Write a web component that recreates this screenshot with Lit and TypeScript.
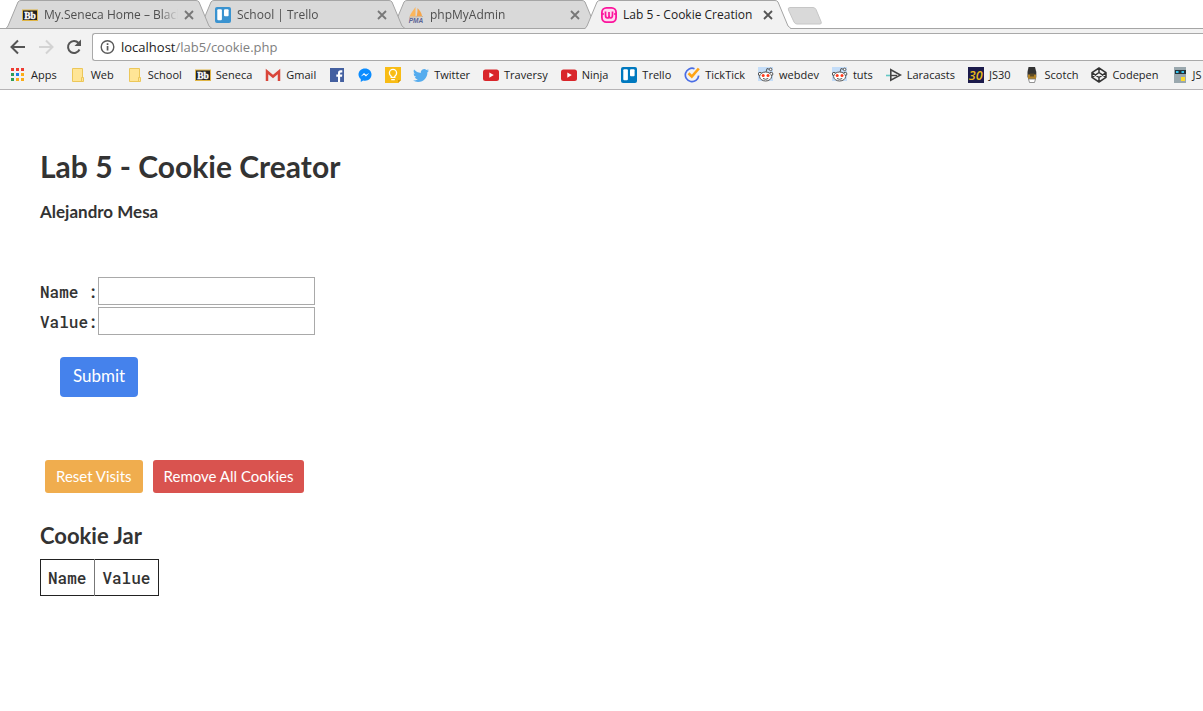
import { LitElement, html, css, svg, nothing, TemplateResult } from "lit";
import { customElement, property } from "lit/decorators.js";
import { classMap } from "lit/directives/class-map.js";

const blackboard = svg`<rect y="2.500" width="16" height="11.500" fill="#e0b544"/><rect x="1" y="3.500" width="14" height="9.500" fill="#222"/><text x="8" y="11.500" text-anchor="middle" font-family="Liberation Serif, serif" font-weight="700" font-size="9.500" fill="#fff" stroke="#fff" stroke-width=".3">Bb</text>`;
const youtube = svg`<rect y="2.500" width="16" height="11.500" rx="2.500" fill="#d9252a"/><path d="M6.300 5.500v5.200L10.800 8.100z" fill="#fff"/>`;
const folder = svg`<path d="M2.500 1.500h10v10h1v3h-11z" fill="#ffe596" stroke="#ecc759"/><path d="M11.500 14v-3.500h2V14" fill="#ffe596" stroke="#ecc759"/>`;
const reddit = svg`<rect y="0" width="15" height="14" fill="#c4ddf8"/><path d="M8 5l1-3.500 3 1" fill="none" stroke="#555"/><circle cx="12.600" cy="2.400" r="1.300" fill="#fff" stroke="#555"/><circle cx="2" cy="7" r="1.700" fill="#fff" stroke="#555"/><circle cx="13.200" cy="7" r="1.700" fill="#fff" stroke="#555"/><ellipse cx="7.600" cy="9.500" rx="6" ry="4.500" fill="#fff" stroke="#555"/><circle cx="5.200" cy="8.500" r="1.500" fill="#ff3a1c"/><circle cx="10" cy="8.500" r="1.500" fill="#ff3a1c"/><path d="M5 11.500q2.600 1.600 5.200 0" fill="none" stroke="#555"/>`;
const trello = (fill: string) => svg`<rect width="16" height="16" rx="2" fill="${fill}"/><rect x="2.300" y="2.300" width="4.600" height="11" rx="1" fill="#fff"/><rect x="9" y="2.300" width="4.600" height="7" rx="1" fill="#fff"/>`;

const icons: Record<string, unknown> = {
  blackboard,
  youtube,
  folder,
  reddit,
  trello: trello("#0079bf"),
  trelloTab: trello("#3a93d0"),
  pma: svg`<path d="M7.500 0v9.500H1.500C3 6 5 3.500 7.500 0z" fill="#fbb65c"/><path d="M9.500 1C12 3.500 13.500 6 14 9L8.500 9.700C9.500 6 9.500 4 9.500 1z" fill="#f5a54b"/><path d="M1 10.300l14-.8" stroke="#c9b49b"/><text x="8" y="16" text-anchor="middle" font-family="Liberation Sans, sans-serif" font-weight="700" font-style="italic" font-size="6.500" fill="#5c6495">PMA</text>`,
  wamp: svg`<rect x=".9" y=".9" width="14.200" height="14.200" rx="4.500" fill="#ffd9f0" stroke="#fb149c" stroke-width="1.800"/><path d="M0 7h3M13 7h3M4.500 4.500v3.500q0 3 1.900 3T8 8V5v3q0 3 1.700 3t1.800-3V4.500" fill="none" stroke="#fb149c" stroke-width="1.700"/>`,
  apps: svg`<path d="M1 1h3v3H1zM6 1h3v3H6zM11 1h3v3h-3z" fill="#ee3b32"/><path d="M1 6h3v3H1z" fill="#2e9e57"/><path d="M6 6h3v3H6z" fill="#1a80e8"/><path d="M11 6h3v3h-3zM6 11h3v3H6zM11 11h3v3h-3z" fill="#fbad18"/><path d="M1 11h3v3H1z" fill="#2e9e57"/>`,
  gmail: svg`<path d="M1 3h14v11H1z" fill="#eee"/><path d="M2 14V4.500L8 9.500l6-5V14" fill="none" stroke="#d9453a" stroke-width="2.500"/>`,
  facebook: svg`<rect x="1" y="1" width="14" height="14" fill="#4460a0"/><path d="M9 15V9.700H7.300V7.500H9V6Q9 3.300 11.700 3.300h1.600v2.200H12q-.9 0-.9 1v1h2.200L13 9.700h-1.900V15z" fill="#fff"/>`,
  messenger: svg`<path d="M8 1.500c-3.700 0-6.500 2.600-6.500 6 0 1.900.9 3.500 2.300 4.600V15l2.300-1.600c4.600 1.200 8.400-1.800 8.400-5.900 0-3.400-2.800-6-6.500-6z" fill="#0a8cff"/><path d="M3.700 9.500l3.300-3.400 2 1.600 3.200-1.700L9 9.500 7 7.800z" fill="#fff"/>`,
  keep: svg`<path d="M0 0h16v13l-3 3H0z" fill="#f8bc15"/><path d="M16 13h-3v3z" fill="#d99a05"/><path d="M6.200 10.400V9.300Q4.400 8 4.400 6a3.600 3.600 0 0 1 7.200 0q0 2-1.800 3.300v1.100zM6.200 12.700h3.600" fill="none" stroke="#fff" stroke-width="1.300"/>`,
  twitter: svg`<path transform="translate(0 .5) scale(.667)" d="M23.950 4.570a10 10 0 0 1-2.820.770 4.960 4.960 0 0 0 2.160-2.720c-.950.550-2.010.950-3.130 1.180a4.920 4.920 0 0 0-8.380 4.480C7.690 8.090 4.070 6.130 1.640 3.160a4.820 4.820 0 0 0-.67 2.480c0 1.710.87 3.210 2.190 4.100a4.900 4.900 0 0 1-2.230-.620v.060a4.920 4.920 0 0 0 3.950 4.830 5 5 0 0 1-2.210.080 4.940 4.940 0 0 0 4.600 3.420A9.870 9.870 0 0 1 0 19.540a13.990 13.990 0 0 0 7.550 2.210c9.050 0 14-7.500 14-13.980l-.020-.630a9.940 9.940 0 0 0 2.460-2.550z" fill="#55acee"/>`,
  ticktick: svg`<path d="M10.500 1.700a6.700 6.700 0 1 0 4.200 7" fill="none" stroke="#4a6de5" stroke-width="1.700"/><path d="M4.500 6.300l3.300 3.200 7-8" fill="none" stroke="#ffa415" stroke-width="2.600"/>`,
  laracasts: svg`<path d="M4.800 2.700L14.500 8 4.800 13.200V8z" fill="#f2f2f2" stroke="#444" stroke-width="1.600"/><path d="M0 8.500h4" stroke="#62c7c4" stroke-width="1.600"/><path d="M4 8.500h7" stroke="#444" stroke-width="1.400"/>`,
  js30: svg`<rect width="16" height="16" fill="#1c1b4b"/><text x="7.700" y="13" text-anchor="middle" font-family="Open Sans, sans-serif" font-weight="600" font-style="italic" font-size="12.500" fill="#edbd18">30</text>`,
  scotch: svg`<path d="M4.500 0h6.500l1.300 5v5.500H3.500V5z" fill="#333"/><path d="M4 7.500h8v4.500H4z" fill="#b28327"/><path d="M6 6.500h4v3H6z" fill="#5d4b24"/><path d="M4.500 12h7l-1 3.500h-5z" fill="#fff" stroke="#777" stroke-width=".8"/>`,
  codepen: svg`<path d="M8 1l7 4.600v4.800L8 15l-7-4.600V5.600zM8 1v4.500M8 15v-4.500M1 5.600l7 4.900 7-4.900M1 10.400l7-4.900 7 4.900" fill="none" stroke="#333" stroke-width="1.500" stroke-linejoin="round"/>`,
  robot: svg`<path d="M2 0h12v16H2z" fill="#9aa8ae"/><rect x="3" y="3" width="11" height="4" fill="#263238"/><path d="M4 4h2.500v2H4zM9.500 4H12v2H9.500z" fill="#35c3ee"/><rect x="9" y="10" width="4" height="4" fill="#fddc2c"/>`,
};

const icon = (name: string): TemplateResult =>
  html`<svg class="icon" viewBox="0 0 16 16" aria-hidden="true">${icons[name]}</svg>`;

const iconStyles = css`
  .icon {
    width: 16px;
    height: 16px;
    flex: none;
    display: block;
  }
`;

@customElement("browser-tab")
class BrowserTab extends LitElement {
  @property() label = "";
  @property() icon = "";
  @property({ type: Boolean, reflect: true }) active = false;

  static styles = [
    iconStyles,
    css`
      :host {
        display: grid;
        width: 206px;
        height: 29px;
        flex: none;
      }
      .shape,
      .tab {
        grid-area: 1 / 1;
      }
      .shape {
        width: 206px;
        height: 29px;
      }
      .tab {
        display: flex;
        align-items: center;
        min-width: 0;
        padding: 0 18px 0 16px;
        color: #4f4f4f;
      }
      .tab.active {
        color: #222;
      }
      .label {
        flex: 1;
        min-width: 0;
        margin: 0 4px 0 6px;
        overflow: hidden;
        white-space: nowrap;
        mask-image: linear-gradient(to right, #000 calc(100% - 20px), transparent calc(100% - 2px));
      }
      .active .label {
        mask-image: none;
      }
      .close {
        border: 0;
        padding: 0;
        background: none;
        width: 10px;
        height: 10px;
      }
      .close svg {
        display: block;
      }
    `,
  ];

  render() {
    const fill = this.active ? "#f2f2f2" : "#d9d9d9";
    return html`
      <svg class="shape" viewBox="0 0 206 29" aria-hidden="true">
        <path d="M0 29L2 26 12 2Q13 .5 15 .5H190Q192 .5 193 2L203 26 206 29z" fill=${fill} />
        <path d="M0 28.500L2 26 12 2Q13 .5 15 .5H190Q192 .5 193 2L203 26 206 28.500" fill="none" stroke="#a5a5a5" />
        ${this.active ? nothing : svg`<path d="M0 28.500H206" stroke="#a5a5a5"/>`}
      </svg>
      <div class=${classMap({ tab: true, active: this.active })}>
        ${icon(this.icon)}
        <span class="label">${this.label}</span>
        <button class="close" aria-label="Close tab">
          <svg width="10" height="10" viewBox="0 0 10 10">
            <path d="M1 1l8 8M9 1L1 9" stroke=${this.active ? "#555" : "#777"} stroke-width="1.800" />
          </svg>
        </button>
      </div>
    `;
  }
}

const bookmarks: [string, string][] = [
  ["apps", "Apps"],
  ["folder", "Web"],
  ["folder", "School"],
  ["blackboard", "Seneca"],
  ["gmail", "Gmail"],
  ["facebook", ""],
  ["messenger", ""],
  ["keep", ""],
  ["twitter", "Twitter"],
  ["youtube", "Traversy"],
  ["youtube", "Ninja"],
  ["trello", "Trello"],
  ["ticktick", "TickTick"],
  ["reddit", "webdev"],
  ["reddit", "tuts"],
  ["laracasts", "Laracasts"],
  ["js30", "JS30"],
  ["scotch", "Scotch"],
  ["codepen", "Codepen"],
  ["robot", "JS"],
];

@customElement("browser-chrome")
class BrowserChrome extends LitElement {
  static styles = [
    iconStyles,
    css`
      :host {
        display: block;
        font: 12px/16px "Open Sans", sans-serif;
        color: #222;
      }
      .strip {
        display: flex;
        padding-left: 6px;
        height: 29px;
        overflow: hidden;
        background: linear-gradient(#a5a5a5, #a5a5a5) 0 28px / 100% 1px no-repeat #fff;
      }
      browser-tab {
        margin-right: -13px;
        z-index: 1;
      }
      browser-tab:nth-of-type(1) {
        z-index: 3;
      }
      browser-tab:nth-of-type(2) {
        z-index: 2;
      }
      browser-tab[active] {
        z-index: 4;
      }
      button {
        border: 0;
        padding: 0;
        background: none;
      }
      .new-tab {
        margin: 7px 0 0 9px;
        height: 18px;
      }
      .new-tab svg {
        display: block;
      }
      .toolbar {
        display: flex;
        align-items: center;
        gap: 12px;
        height: 36px;
        padding-left: 10px;
        background: #f2f2f2;
      }
      .address {
        flex: 1;
        display: flex;
        align-items: center;
        gap: 5px;
        margin-left: -2px;
        height: 26px;
        padding-left: 7px;
        border: 1px solid #a9a9a9;
        border-right: 0;
        border-radius: 3px 0 0 3px;
        background: #fff;
        font-size: 13px;
        line-height: 18px;
      }
      .path {
        color: #808080;
      }
      .bookmarks {
        display: flex;
        gap: 12px;
        height: 24px;
        padding: 0 0 0 10px;
        overflow: hidden;
        background: #f2f2f2;
        border-bottom: 1px solid #b6b4b6;
      }
      .bookmark {
        display: flex;
        flex: none;
        gap: 5px;
        height: 20px;
        align-items: center;
        color: inherit;
        text-decoration: none;
        font-size: 11px;
        white-space: nowrap;
      }
      .bookmark span {
        padding-right: 1px;
      }
    `,
  ];

  render() {
    return html`
      <div class="strip">
        <browser-tab icon="blackboard" label="My.Seneca Home – Blackboard"></browser-tab>
        <browser-tab icon="trelloTab" label="School | Trello"></browser-tab>
        <browser-tab icon="pma" label="phpMyAdmin"></browser-tab>
        <browser-tab icon="wamp" label="Lab 5 - Cookie Creation" active></browser-tab>
        <button class="new-tab" aria-label="New tab">
          <svg width="36" height="18" viewBox="0 0 36 18">
            <path d="M3 .5h23q2 0 3 2l5 12q1 2.500-1 2.500H10q-2 0-3-2L1.500 3Q.5.500 3 .5z" fill="#d9d9d9" stroke="#c6c6c6" />
          </svg>
        </button>
      </div>
      <div class="toolbar">
        <button aria-label="Back">
          <svg class="icon" viewBox="0 0 16 16"><path d="M15 8H2M8 1.500L1.500 8 8 14.500" fill="none" stroke="#555" stroke-width="2" /></svg>
        </button>
        <button aria-label="Forward" disabled>
          <svg class="icon" viewBox="0 0 16 16"><path d="M1 8h13M8 1.500L14.500 8 8 14.500" fill="none" stroke="#d3d3d3" stroke-width="2" /></svg>
        </button>
        <button aria-label="Reload">
          <svg class="icon" viewBox="0 0 16 16"><path d="M13.500 10.500A6 6 0 1 1 12.500 4" fill="none" stroke="#555" stroke-width="2" /><path d="M15 .5v6.500H8.500z" fill="#555" /></svg>
        </button>
        <div class="address">
          <svg class="icon" viewBox="0 0 16 16"><circle cx="7.500" cy="8" r="6.300" fill="none" stroke="#5a5a5a" stroke-width="1.400" /><path d="M6.700 7h1.700v4.500H6.700zM6.700 4.300h1.700v1.700H6.700z" fill="#5a5a5a" /></svg>
          <span>localhost<span class="path">/lab5/cookie.php</span></span>
        </div>
      </div>
      <nav class="bookmarks" aria-label="Bookmarks">
        ${bookmarks.map(
          ([name, label]) =>
            html`<a class="bookmark" href="#" aria-label=${label || name}>${icon(name)}${label ? html`<span>${label}</span>` : nothing}</a>`
        )}
      </nav>
    `;
  }
}

@customElement("app-root")
class AppRoot extends LitElement {
  static styles = css`
    :host {
      display: block;
      min-height: 100vh;
      background: #fff;
      color: #333;
      font: 16px/20px Lato, sans-serif;
    }
    main {
      padding: 58px 40px 0;
    }
    h1,
    h2,
    h3 {
      margin: 0;
    }
    h1 {
      font-size: 30px;
      line-height: 36px;
    }
    h3 {
      font-size: 17px;
      margin: 18px 0 55px;
    }
    h2 {
      font-size: 22px;
      line-height: 28px;
      margin: 29px 0 9px;
    }
    .row {
      display: flex;
      align-items: center;
      margin-bottom: 2px;
    }
    label,
    table {
      font: 500 16px/21px "Roboto Mono", "Liberation Mono", monospace;
      white-space: pre;
    }
    input {
      box-sizing: border-box;
      width: 217px;
      height: 28px;
      border: 1px solid #a9a9a9;
      padding: 2px 4px;
      font: inherit;
    }
    button {
      border: 0;
      border-radius: 4px;
      color: #fff;
      font: 17px/20px Lato, sans-serif;
    }
    .submit {
      margin: 20px 0 0 20px;
      padding: 9px 13px 11px;
      background: #4582ec;
    }
    .actions {
      display: flex;
      gap: 10px;
      margin: 63px 0 0 5px;
    }
    .actions button {
      border-radius: 3px;
      font-size: 15px;
      padding: 6px 11px 7px;
    }
    .reset {
      background: #f0ad4e;
    }
    .remove {
      background: #d9534f;
    }
    table {
      border-collapse: collapse;
      border: 1px solid #222;
    }
    th {
      padding: 7px 8px 7px 7px;
      font-weight: 500;
    }
    th + th {
      border-left: 1px solid #777;
    }
  `;

  render() {
    return html`
      <browser-chrome></browser-chrome>
      <main>
        <h1>Lab 5 - Cookie Creator</h1>
        <h3>Alejandro Mesa</h3>
        <form @submit=${(e: Event) => e.preventDefault()}>
          <div class="row"><label for="name">Name :</label><input id="name" type="text" /></div>
          <div class="row"><label for="value">Value:</label><input id="value" type="text" /></div>
          <button class="submit">Submit</button>
        </form>
        <div class="actions">
          <button class="reset">Reset Visits</button>
          <button class="remove">Remove All Cookies</button>
        </div>
        <h2>Cookie Jar</h2>
        <table>
          <thead>
            <tr><th>Name</th><th>Value</th></tr>
          </thead>
        </table>
      </main>
    `;
  }
}
